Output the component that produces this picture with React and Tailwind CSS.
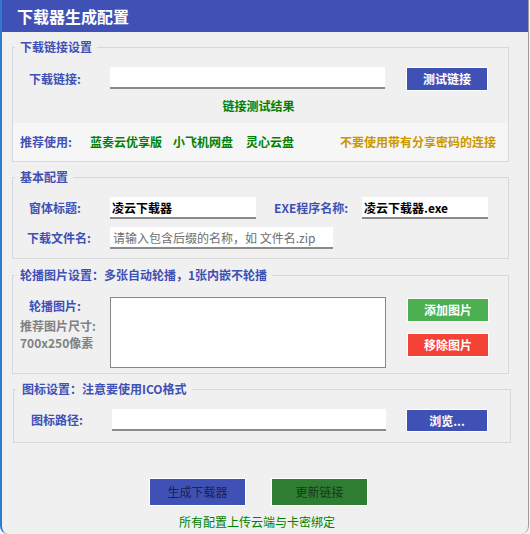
export default function App() {
  const font = "font-['Noto_Sans_CJK_SC','Noto_Sans',sans-serif]";

  return (
    <div className={`w-[530px] h-[534px] bg-[#f4f4f4] ${font} text-[12px] leading-[14px] overflow-hidden`}>
      <div className="w-[529px] h-[534px] bg-[#f0f0f0] border-l-2 border-l-[#2f7bd1] border-r border-r-[#9c9c9c] rounded-b-[8px] overflow-hidden">
        {/* title bar */}
        <div className="h-[32px] bg-[#3f51b5] flex items-center pl-[15px]">
          <h1 className="text-white text-[16px] font-bold leading-[20px]">下载器生成配置</h1>
        </div>

        {/* 下载链接设置 */}
        <fieldset className="ml-[10px] mt-[7px] w-[497px] border border-[#d8d8d8]">
          <legend className="ml-[2px] px-[5px] text-[#3f51b5] font-bold leading-[16px]">下载链接设置</legend>
          <div className="flex items-center mt-[12px] pl-[16px] h-[24px]">
            <span className="w-[81px] shrink-0 text-[#3f51b5] font-bold">下载链接:</span>
            <input
              readOnly
              className="w-[275px] h-[22px] bg-white border-b-2 border-[#8a8a8a] outline-none self-start"
            />
            <button className="ml-[21px] w-[82px] h-[24px] bg-[#3f51b5] border border-white text-white font-bold">
              测试链接
            </button>
          </div>
          <p className="mt-[8px] text-center pr-[4px] text-[#008000] font-bold">链接测试结果</p>
          <div className="mt-[10px] h-[38px] bg-[#f6f6f6] flex items-center pl-[7px] font-bold whitespace-nowrap">
            <span className="w-[70px] shrink-0 text-[#3f51b5]">推荐使用:</span>
            <span className="w-[83px] shrink-0 text-[#008000]">蓝奏云优享版</span>
            <span className="w-[73px] shrink-0 text-[#008000]">小飞机网盘</span>
            <span className="w-[94px] shrink-0 text-[#008000]">灵心云盘</span>
            <span className="text-[#c99700]">不要使用带有分享密码的连接</span>
          </div>
        </fieldset>

        {/* 基本配置 */}
        <fieldset className="ml-[10px] mt-[7px] w-[497px] border border-[#d8d8d8] pb-[9px]">
          <legend className="ml-[2px] px-[5px] text-[#3f51b5] font-bold leading-[16px]">基本配置</legend>
          <div className="flex items-center mt-[12px] pl-[16px]">
            <span className="w-[81px] shrink-0 text-[#3f51b5] font-bold">窗体标题:</span>
            <input
              readOnly
              defaultValue="凌云下载器"
              className="w-[146px] h-[22px] bg-white border-b-2 border-[#8a8a8a] outline-none pl-[2px] text-black font-bold text-[12px]"
            />
            <span className="ml-[18px] w-[88px] shrink-0 text-[#3f51b5] font-bold">EXE程序名称:</span>
            <input
              readOnly
              defaultValue="凌云下载器.exe"
              className="w-[126px] h-[22px] bg-white border-b-2 border-[#8a8a8a] outline-none pl-[2px] text-black font-bold text-[12px]"
            />
          </div>
          <div className="flex items-center mt-[8px] pl-[14px]">
            <span className="w-[83px] shrink-0 text-[#3f51b5] font-bold">下载文件名:</span>
            <input
              readOnly
              placeholder="请输入包含后缀的名称，如 文件名.zip"
              className="w-[223px] h-[22px] bg-white border-b-2 border-[#8a8a8a] outline-none pl-[3px] text-[12px] placeholder:text-[#6e6e6e]"
            />
          </div>
        </fieldset>

        {/* 轮播图片设置 */}
        <fieldset className="ml-[10px] mt-[8px] w-[497px] border border-[#d8d8d8] pb-[5px]">
          <legend className="ml-[2px] px-[5px] text-[#3f51b5] font-bold leading-[16px]">
            轮播图片设置：多张自动轮播，1张内嵌不轮播
          </legend>
          <div className="flex mt-[14px]">
            <div className="w-[97px] shrink-0 pt-[2px] font-bold">
              <p className="pl-[16px] text-[#3f51b5]">轮播图片:</p>
              <p className="pl-[7px] mt-[6px] text-[#808080]">推荐图片尺寸:</p>
              <p className="pl-[7px] mt-[3px] text-[#808080]">700x250像素</p>
            </div>
            <div className="w-[276px] h-[71px] bg-white border border-[#888]" />
            <div className="ml-[21px] flex flex-col gap-[11px] pt-[1px]">
              <button className="w-[82px] h-[24px] bg-[#4caf50] border border-white text-white font-bold">
                添加图片
              </button>
              <button className="w-[82px] h-[24px] bg-[#f44336] border border-white text-white font-bold">
                移除图片
              </button>
            </div>
          </div>
        </fieldset>

        {/* 图标设置 */}
        <fieldset className="ml-[11px] mt-[7px] w-[498px] border border-[#d8d8d8] pb-[10px]">
          <legend className="ml-[3px] px-[5px] text-[#3f51b5] font-bold leading-[16px]">
            图标设置：注意要使用ICO格式
          </legend>
          <div className="flex items-start mt-[12px] pl-[17px]">
            <span className="w-[81px] shrink-0 text-[#3f51b5] font-bold leading-[22px]">图标路径:</span>
            <input
              readOnly
              className="w-[274px] h-[22px] bg-white border-b-2 border-[#8a8a8a] outline-none"
            />
            <button className="ml-[20px] w-[82px] h-[23px] bg-[#3f51b5] border border-white text-white font-bold">
              浏览...
            </button>
          </div>
        </fieldset>

        {/* actions */}
        <div className="flex gap-[25px] pl-[147px] mt-[35px]">
          <button className="w-[97px] h-[28px] bg-[#3f51b5] border border-white text-[#1c2150]">生成下载器</button>
          <button className="w-[97px] h-[28px] bg-[#2e7d32] border border-white text-[#15381a]">更新链接</button>
        </div>
        <p className="w-[510px] mt-[9px] text-center text-[#008000]">所有配置上传云端与卡密绑定</p>
      </div>
    </div>
  );
}
